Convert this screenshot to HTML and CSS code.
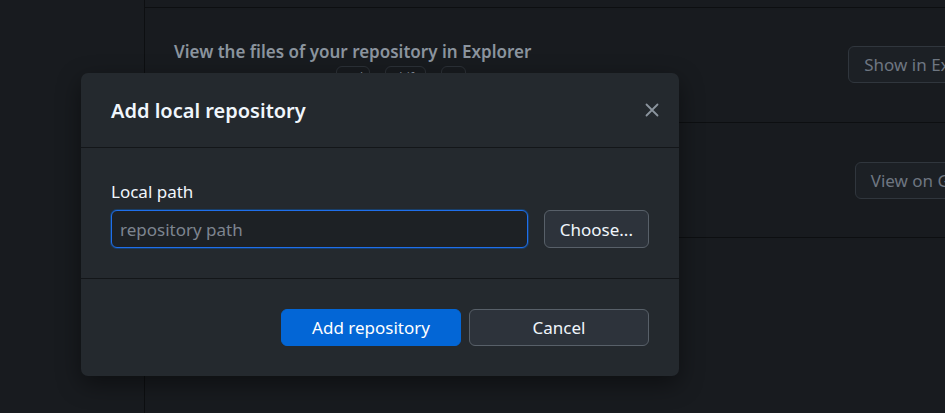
FILE: index.html
```html
<!DOCTYPE html>
<html lang="en">
<head>
<meta charset="utf-8">
<title>Add local repository</title>
<link rel="stylesheet" href="styles.css">
</head>
<body>
<div class="app">
  <aside class="sidebar"></aside>
  <main class="main">
    <div class="row row-top"></div>
    <div class="row">
      <div class="row-text">
        <div class="row-title">View the files of your repository in Explorer</div>
        <div class="keys"><span class="key k1">Ctrl</span><span class="key k2">Shift</span><span class="key k3">F</span></div>
      </div>
      <button class="ghost-btn">Show in Explorer</button>
    </div>
    <div class="row">
      <div class="row-text">
        <div class="row-title">Open the repository page on GitHub in your browser</div>
      </div>
      <button class="ghost-btn ghost-btn-2">View on GitHub</button>
    </div>
  </main>
</div>

<div class="dialog">
  <header class="dialog-header">
    <h1 class="dialog-title">Add local repository</h1>
    <button class="close" aria-label="Close">
      <svg width="14" height="14" viewBox="0 0 14 14"><path d="M1.5 1.5 L12.5 12.5 M12.5 1.5 L1.5 12.5" stroke="#8b949e" stroke-width="1.8" stroke-linecap="round"/></svg>
    </button>
  </header>
  <section class="dialog-body">
    <label class="label" for="path">Local path</label>
    <div class="path-row">
      <input id="path" class="input" type="text" placeholder="repository path">
      <button class="btn btn-choose">Choose...</button>
    </div>
  </section>
  <footer class="dialog-footer">
    <button class="btn btn-primary">Add repository</button>
    <button class="btn">Cancel</button>
  </footer>
</div>
</body>
</html>
```

FILE: styles.css
```css
* { box-sizing: border-box; }
html, body { margin: 0; height: 100%; }
body {
  background: #181b1f;
  font-family: "Noto Sans", "Open Sans", sans-serif;
  color: #e6edf3;
  overflow: hidden;
}
.app { display: flex; height: 100%; }
.sidebar { width: 145px; flex: none; border-right: 1px solid #0d0f11; background: #181b1f; }
.main { flex: 1; display: flex; flex-direction: column; background: #181b1f; overflow: hidden; }
.row {
  height: 115px;
  flex: none;
  border-bottom: 1px solid #0d0f11;
  display: flex;
  align-items: center;
  justify-content: space-between;
  padding-left: 29px;
}
.row-top { height: 8px; }
.row-text { display: flex; flex-direction: column; align-self: flex-start; margin-top: 33px; }
.row-title {
  font-size: 17px;
  line-height: 22px;
  font-weight: 600;
  color: #8b949e;
  white-space: nowrap;
}
.keys { display: flex; gap: 0; margin-top: 3px; }
.key {
  height: 24px;
  border: 1px solid #2c3137;
  border-radius: 6px;
  font-size: 12px;
  color: #8b949e;
  text-align: center;
  line-height: 22px;
}
.k1 { width: 34px; margin-left: 162px; }
.k2 { width: 41px; margin-left: 15px; }
.k3 { width: 25px; margin-left: 15px; }
.ghost-btn {
  font-family: inherit;
  font-size: 17px;
  color: #6e7681;
  background: #1c2025;
  border: 1px solid #30363d;
  border-radius: 6px;
  height: 37px;
  padding: 0 15px;
  margin-right: -69px;
  white-space: nowrap;
  margin-top: -2px;
  flex: none;
}
.ghost-btn-2 { margin-right: -65px; margin-top: 0; }

.dialog {
  position: absolute;
  left: 81px;
  top: 73px;
  width: 598px;
  background: #24292e;
  border-radius: 7px;
  box-shadow: 0 8px 24px rgba(0,0,0,0.45);
}
.dialog-header {
  height: 75px;
  display: flex;
  align-items: center;
  justify-content: space-between;
  padding: 0 20px 0 30px;
  border-bottom: 1px solid #131619;
}
.dialog-title {
  margin: 0;
  font-size: 20px;
  font-weight: 600;
  color: #f0f6fc;
}
.close {
  background: none;
  border: 0;
  padding: 0;
  width: 14px;
  height: 14px;
  display: flex;
}
.dialog-body {
  padding: 33px 30px 30px 30px;
  border-bottom: 1px solid #131619;
}
.label { display: block; font-size: 17px; color: #f0f6fc; line-height: 22px; margin-bottom: 7px; }
.path-row { display: flex; gap: 16px; }
.input {
  flex: 1;
  height: 38px;
  background: #1d2125;
  border: 1px solid #1f6feb;
  border-radius: 6px;
  box-shadow: 0 0 0 1px rgba(3,102,214,0.35);
  font-family: inherit;
  font-size: 17px;
  color: #e6edf3;
  padding: 0 8px;
  outline: none;
}
.input::placeholder { color: #7d8590; }
.btn {
  font-family: inherit;
  font-size: 17px;
  color: #f0f6fc;
  background: #2d333b;
  border: 1px solid #586069;
  border-radius: 6px;
  height: 37px;
  padding: 0 15px;
  white-space: nowrap;
}
.btn-choose { padding: 0 15px; height: 38px; }
.dialog-footer {
  display: flex;
  justify-content: flex-end;
  gap: 8px;
  padding: 30px 30px 30px;
}
.dialog-footer .btn { width: 180px; }
.btn-primary { background: #0366d6; border-color: #0366d6; color: #ffffff; }
```
